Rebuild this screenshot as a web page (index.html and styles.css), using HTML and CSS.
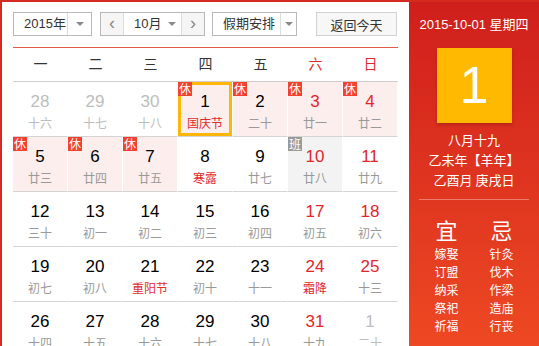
FILE: index.html
```html
<!DOCTYPE html>
<html lang="zh-CN">
<head>
    <meta charset="UTF-8">
    <meta name="viewport" content="width=device-width, initial-scale=1.0">
    <title>万年历</title>
    <link rel="stylesheet" href="styles.css">
</head>
<body>

<div class="calendar">
    <div class="main">
        <div class="toolbar">
            <div class="select year">
                <span class="select-text">2015年</span>
                <span class="select-arrow"><i></i></span>
            </div>
            <div class="month-group">
                <span class="step">&lsaquo;</span>
                <div class="select month">
                    <span class="select-text">10月</span>
                    <span class="select-arrow"><i></i></span>
                </div>
                <span class="step">&rsaquo;</span>
            </div>
            <div class="select holiday">
                <span class="select-text">假期安排</span>
                <span class="select-arrow"><i></i></span>
            </div>
            <button class="today-btn">返回今天</button>
        </div>

        <div class="weekdays">
            <span>一</span><span>二</span><span>三</span><span>四</span><span>五</span>
            <span class="weekend">六</span><span class="weekend">日</span>
        </div>

        <div class="days">
            <div class="day other"><b class="num">28</b><span class="lunar">十六</span></div>
            <div class="day other"><b class="num">29</b><span class="lunar">十七</span></div>
            <div class="day other"><b class="num">30</b><span class="lunar">十八</span></div>
            <div class="day rest today"><span class="tag">休</span><b class="num">1</b><span class="lunar fest">国庆节</span></div>
            <div class="day rest"><span class="tag">休</span><b class="num">2</b><span class="lunar">二十</span></div>
            <div class="day rest weekend"><span class="tag">休</span><b class="num">3</b><span class="lunar">廿一</span></div>
            <div class="day rest weekend"><span class="tag">休</span><b class="num">4</b><span class="lunar">廿二</span></div>

            <div class="day rest"><span class="tag">休</span><b class="num">5</b><span class="lunar">廿三</span></div>
            <div class="day rest"><span class="tag">休</span><b class="num">6</b><span class="lunar">廿四</span></div>
            <div class="day rest"><span class="tag">休</span><b class="num">7</b><span class="lunar">廿五</span></div>
            <div class="day"><b class="num">8</b><span class="lunar fest">寒露</span></div>
            <div class="day"><b class="num">9</b><span class="lunar">廿七</span></div>
            <div class="day work weekend"><span class="tag">班</span><b class="num">10</b><span class="lunar">廿八</span></div>
            <div class="day weekend"><b class="num">11</b><span class="lunar">廿九</span></div>

            <div class="day"><b class="num">12</b><span class="lunar">三十</span></div>
            <div class="day"><b class="num">13</b><span class="lunar">初一</span></div>
            <div class="day"><b class="num">14</b><span class="lunar">初二</span></div>
            <div class="day"><b class="num">15</b><span class="lunar">初三</span></div>
            <div class="day"><b class="num">16</b><span class="lunar">初四</span></div>
            <div class="day weekend"><b class="num">17</b><span class="lunar">初五</span></div>
            <div class="day weekend"><b class="num">18</b><span class="lunar">初六</span></div>

            <div class="day"><b class="num">19</b><span class="lunar">初七</span></div>
            <div class="day"><b class="num">20</b><span class="lunar">初八</span></div>
            <div class="day"><b class="num">21</b><span class="lunar fest">重阳节</span></div>
            <div class="day"><b class="num">22</b><span class="lunar">初十</span></div>
            <div class="day"><b class="num">23</b><span class="lunar">十一</span></div>
            <div class="day weekend"><b class="num">24</b><span class="lunar fest">霜降</span></div>
            <div class="day weekend"><b class="num">25</b><span class="lunar">十三</span></div>

            <div class="day"><b class="num">26</b><span class="lunar">十四</span></div>
            <div class="day"><b class="num">27</b><span class="lunar">十五</span></div>
            <div class="day"><b class="num">28</b><span class="lunar">十六</span></div>
            <div class="day"><b class="num">29</b><span class="lunar">十七</span></div>
            <div class="day"><b class="num">30</b><span class="lunar">十八</span></div>
            <div class="day weekend"><b class="num">31</b><span class="lunar">十九</span></div>
            <div class="day other"><b class="num">1</b><span class="lunar">二十</span></div>
        </div>
    </div>

    <div class="panel">
        <p class="panel-date">2015-10-01 星期四</p>
        <div class="big-day">1</div>
        <div class="panel-lunar">
            <p>八月十九</p>
            <p>乙未年【羊年】</p>
            <p>乙酉月 庚戌日</p>
        </div>
        <div class="almanac">
            <div class="almanac-col">
                <h2>宜</h2>
                <p>嫁娶</p><p>订盟</p><p>纳采</p><p>祭祀</p><p>祈福</p>
            </div>
            <div class="almanac-col">
                <h2>忌</h2>
                <p>针灸</p><p>伐木</p><p>作梁</p><p>造庙</p><p>行丧</p>
            </div>
        </div>
    </div>
</div>

</body>
</html>
```

FILE: styles.css
```css
* {
    margin: 0;
    padding: 0;
    box-sizing: border-box;
}

body {
    font-family: "Liberation Sans", Arial, "Noto Sans CJK SC", sans-serif;
    background: #fff;
    color: #333;
    overflow: hidden;
}

.calendar {
    display: flex;
    width: 539px;
    height: 400px;
    border-top: 2px solid #d42a1f;
    border-left: 2px solid #d42a1f;
}

.main {
    width: 407px;
    padding: 10px 11px 0;
    background: #fff;
}

/* toolbar */
.toolbar {
    display: flex;
    height: 24px;
    white-space: nowrap;
}

.select {
    display: flex;
    height: 24px;
    border: 1px solid #b9b9b9;
    background: #fff;
    font-size: 13px;
    line-height: 22px;
    font-family: "Liberation Sans", "Noto Sans CJK SC", sans-serif;
}

.select-text {
    flex: 1;
    padding-left: 10px;
}

.select-arrow {
    display: flex;
    align-items: center;
    justify-content: center;
    width: 24px;
    border-left: 1px solid #ddd;
}

.select-arrow i {
    width: 0;
    height: 0;
    border-left: 4px solid transparent;
    border-right: 4px solid transparent;
    border-top: 4px solid #8a8a8a;
}

.year {
    width: 79px;
}

.month-group {
    display: flex;
    width: 105px;
    height: 24px;
    margin-left: 8px;
    border: 1px solid #b9b9b9;
}

.month-group .month {
    width: 59px;
    border: none;
    border-left: 1px solid #ddd;
    border-right: 1px solid #ddd;
    height: 22px;
}

.month-group .month .select-text {
    padding-left: 10px;
}

.month-group .month .select-arrow {
    border-left: none;
    width: 18px;
}

.step {
    width: 22px;
    text-align: center;
    background: #f5f5f5;
    color: #888;
    font-size: 18px;
    line-height: 20px;
}

.holiday {
    width: 85px;
    margin-left: 7px;
}

.holiday .select-arrow {
    width: 16px;
}

.today-btn {
    width: 81px;
    height: 24px;
    margin-left: 19px;
    border: 1px solid #d2d2d2;
    background: #f7f7f7;
    color: #333;
    font-family: "Liberation Sans", "Noto Sans CJK SC", sans-serif;
    font-size: 13px;
}

/* grid */
.weekdays {
    display: grid;
    grid-template-columns: repeat(7, 55px);
    height: 35px;
    margin-top: 11px;
    border-top: 1px solid #e3574c;
    border-bottom: 1px solid #cfcfcf;
    font-family: "Noto Sans CJK SC", sans-serif;
    font-size: 14px;
    line-height: 31px;
    text-align: center;
    color: #333;
}

.weekdays .weekend {
    color: #e02b2b;
}

.days {
    display: grid;
    grid-template-columns: repeat(7, 55px);
    grid-auto-rows: 55px;
}

.day {
    position: relative;
    display: flex;
    flex-direction: column;
    align-items: center;
    padding-top: 10px;
    border-bottom: 1px solid #d4d4d4;
    border-right: 1px solid #fff;
}

.num {
    font-weight: normal;
    font-size: 17px;
    line-height: 20px;
    color: #000;
}

.lunar {
    margin-top: 3px;
    font-family: "Noto Sans CJK SC", sans-serif;
    font-size: 12px;
    line-height: 16px;
    color: #999;
}

.lunar.fest {
    color: #e02b2b;
}

.weekend .num {
    color: #e3262c;
}

.other .num {
    color: #bdbdbd;
}

.other .lunar {
    color: #bdbdbd;
}

.rest {
    background: #fdeeee;
}

.work {
    background: #f3f3f3;
}

.today {
    box-shadow: inset 0 0 0 3px #ffb60a;
}

.tag {
    position: absolute;
    top: 0;
    left: 0;
    width: 14px;
    height: 14px;
    background: #f2412f;
    color: #fff;
    font-family: "Noto Sans CJK SC", sans-serif;
    font-size: 12px;
    line-height: 14px;
    text-align: center;
}

.work .tag {
    background: #9a9a9a;
}

/* right panel */
.panel {
    width: 130px;
    display: flex;
    flex-direction: column;
    align-items: center;
    padding-top: 15px;
    background: linear-gradient(to bottom, #cf1f1c, #f24f24);
    color: #fff;
}

.panel-date {
    font-size: 13px;
    line-height: 16px;
}

.big-day {
    width: 75px;
    height: 75px;
    margin-top: 15px;
    background: #ffb900;
    box-shadow: 0 2px 3px rgba(120, 20, 0, 0.35);
    font-size: 52px;
    line-height: 75px;
    text-align: center;
}

.panel-lunar {
    width: 110px;
    margin-top: 7px;
    padding-bottom: 9px;
    border-bottom: 1px solid rgba(255, 255, 255, 0.35);
    font-family: "Noto Sans CJK SC", sans-serif;
    font-size: 13px;
    line-height: 20px;
    text-align: center;
}

.almanac {
    display: flex;
    width: 110px;
    margin-top: 16px;
}

.almanac-col {
    width: 55px;
    text-align: center;
    font-family: "Noto Sans CJK SC", sans-serif;
    font-size: 12px;
    line-height: 18px;
}

.almanac-col h2 {
    font-size: 22px;
    font-weight: normal;
    line-height: 26px;
    margin-bottom: 3px;
}
```
